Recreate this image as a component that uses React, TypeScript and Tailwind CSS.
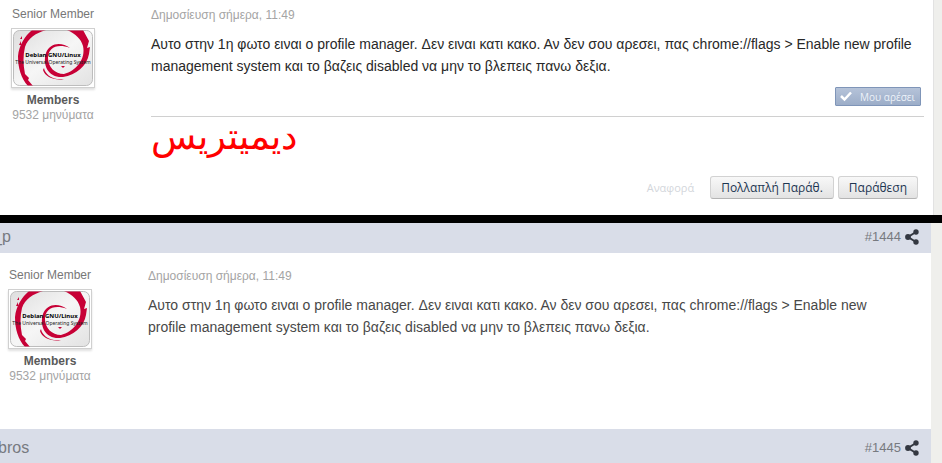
import React from "react";

function Avatar() {
  return (
    <div className="h-[60px] w-[84px] border border-[#d0d0d0] bg-white p-px shadow-[0_2px_2px_rgba(0,0,0,0.12)]">
      <svg viewBox="0 0 80 56" className="block h-full w-full" role="img" aria-label="Debian GNU/Linux">
        <defs>
          <linearGradient id="plate" x1="0" y1="0" x2="1" y2="1">
            <stop offset="0" stopColor="#dedede" />
            <stop offset="0.5" stopColor="#f6f6f6" />
            <stop offset="1" stopColor="#e2e2e2" />
          </linearGradient>
          <clipPath id="plateClip">
            <rect x="0.5" y="0.5" width="79" height="55" rx="6" />
          </clipPath>
        </defs>
        <rect x="0.5" y="0.5" width="79" height="55" rx="6" fill="url(#plate)" stroke="#bdbdbd" />
        <g clipPath="url(#plateClip)" fill="#c70036">
          <path d="M19 0C12 6 6 15 5 26C5 38 8 48 15 56H20L15 50L16 48L12 44C10 34 10 25 12 17C15 8 23 3 33 0Z" />
          <path d="M57 18C49 12 37 12 33 23C29 36 36 48 50 47C63 45 74 36 76 24L77 17L74 18L76 11L70 0H54C63 4 68 9 70 16C73 29 63 41 51 44C42 44 35 37 35 28C35 18 44 13 57 18Z" />
          <path d="M31 38C32 44 38 48 44 49L51 49C42 51 32 47 30 40ZM48 36H52L50 38ZM6 15L8 11V15ZM7 9L9 6L9 9ZM72 8L75 11L74 13Z" />
        </g>
        <text x="40" y="27" textAnchor="middle" className="fill-black font-['Noto_Sans',sans-serif] text-[6px] font-bold">Debian GNU/Linux</text>
        <text x="40" y="34" textAnchor="middle" className="fill-[#222] font-['Noto_Sans',sans-serif] text-[5px]">The Universal Operating System</text>
      </svg>
    </div>
  );
}

function Author() {
  return (
    <aside className="flex w-[84px] shrink-0 flex-col items-center whitespace-nowrap text-xs leading-[15px] text-[#a4a4a4]">
      <p className="mb-[6px] text-[#777]">Senior Member</p>
      <Avatar />
      <p className="mt-[5px] font-bold text-[#5a5a5a]">Members</p>
      <p>9532 μηνύματα</p>
    </aside>
  );
}

function ShareIcon() {
  return (
    <svg viewBox="0 0 14 16" className="h-4 w-[14px]" fill="#343841" aria-hidden="true">
      <path d="M11 3L3 8L11 13" fill="none" stroke="#343841" strokeWidth="2" />
      <circle cx="11" cy="3" r="2.7" />
      <circle cx="3" cy="8" r="2.9" />
      <circle cx="11" cy="13" r="2.7" />
    </svg>
  );
}

function PostBar({ name, number }: { name: React.ReactNode; number: string }) {
  return (
    <header className="flex items-center justify-between overflow-hidden bg-[#d9dde8] pr-3 text-[#777a80]">
      <h2 className="text-base leading-6">{name}</h2>
      <a href={`#post${number}`} className="flex items-center gap-1 text-[13px] leading-4">
        #{number}
        <ShareIcon />
      </a>
    </header>
  );
}

const actionClass =
  "h-[23px] rounded-[3px] border border-[#d2d2d2] border-b-[#b4b4b4] bg-linear-to-b from-[#f8f8f8] to-[#e3e3e3] px-[10px] text-xs leading-5 whitespace-nowrap text-[#1d3652]";

export default function App() {
  return (
    <main className="bg-[#efefec] font-['Liberation_Sans',Arial,sans-serif]">
      <article className="mr-2 flex h-[215px] items-start gap-14 border-r border-[#e2e2e2] bg-white pt-[7px] pr-[9px] pl-[11px]">
        <Author />
        <div className="flex min-w-0 grow flex-col">
          <p className="text-xs leading-4 text-[#a4a4a4]">Δημοσίευση σήμερα, 11:49</p>
          <p className="mt-[10px] text-sm leading-[22px] text-[#282828]">
            Αυτο στην 1η φωτο ειναι ο profile manager. Δεν ειναι κατι κακο. Αν δεν σου αρεσει, πας chrome://flags &gt; Enable new profile management system και το βαζεις disabled να μην το βλεπεις πανω δεξια.
          </p>
          <button className="mt-[10px] mr-[3px] flex h-[19px] w-[86px] items-center justify-between self-end rounded-[1px] border border-[#7f95b8] bg-linear-to-b from-[#b5c3d9] to-[#9cadc8] pr-[5px] pl-1 font-['Open_Sans',sans-serif] text-[10px] leading-4 whitespace-nowrap text-[#edf2f9]">
            <svg viewBox="0 0 12 12" className="h-3 w-3" aria-hidden="true">
              <path d="M1 5L4.500 8.500L11 1.500" fill="none" stroke="white" strokeWidth="2.500" />
            </svg>
            Μου αρέσει
          </button>
          <p lang="ar" className="mt-[10px] h-[60px] border-t border-[#d0d0d0] text-[37px] leading-[40px] text-[#f00]">
            <bdi>ديميتريس</bdi>
          </p>
          <footer className="mr-[6px] flex items-center justify-end gap-1 font-['Open_Sans',sans-serif]">
            <a href="#report" className="mr-3 text-[11px] leading-5 text-[#d3d6db]">Αναφορά</a>
            <button className={actionClass}>Πολλαπλή Παράθ.</button>
            <button className={actionClass}>Παράθεση</button>
          </footer>
        </div>
      </article>

      <div className="h-2 bg-black" />

      <div className="mr-[11px] bg-white">
        <div className="*:h-[30px] *:pb-[2px]">
          <PostBar name={<span className="-ml-[7px]">_p</span>} number="1444" />
        </div>
        <article className="flex h-[176px] items-start gap-14 pt-[15px] pr-6 pl-2">
          <Author />
          <div className="min-w-0 grow">
            <p className="text-xs leading-4 text-[#a4a4a4]">Δημοσίευση σήμερα, 11:49</p>
            <p className="mt-[10px] text-sm leading-[22px] text-[#484848]">
              Αυτο στην 1η φωτο ειναι ο profile manager. Δεν ειναι κατι κακο. Αν δεν σου αρεσει, πας chrome://flags &gt; Enable new profile management system και το βαζεις disabled να μην το βλεπεις πανω δεξια.
            </p>
          </div>
        </article>
        <div className="*:h-[34px] *:pt-1">
          <PostBar name={<span className="-ml-[2px]">bros</span>} number="1445" />
        </div>
      </div>
    </main>
  );
}
